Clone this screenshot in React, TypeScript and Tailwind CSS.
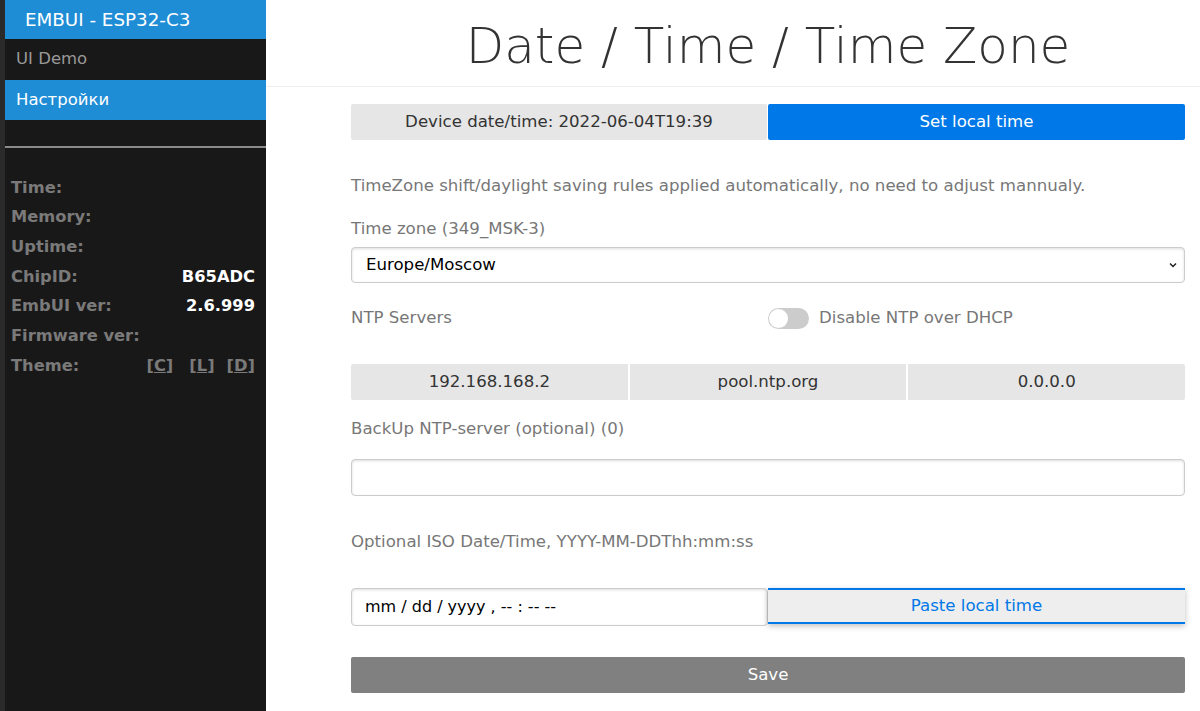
import React from "react";

const font = { fontFamily: '"DejaVu Sans", "Liberation Sans", sans-serif' };

function InfoRow({ label, value, children }: { label: string; value?: string; children?: React.ReactNode }) {
  return (
    <div className="flex items-center justify-between h-[29.7px]">
      <span className="font-bold text-[#7a7a7a] text-[16.3px]">{label}</span>
      {value ? <span className="font-bold text-white text-[16.3px]">{value}</span> : children}
    </div>
  );
}

export default function App() {
  return (
    <div className="flex w-[1200px] h-[711px] overflow-hidden bg-white" style={font}>
      {/* Sidebar */}
      <div className="w-[266px] shrink-0 h-full flex bg-[#191818]">
        <div className="w-[5px] h-full bg-[#2a2a2a]" />
        <div className="flex-1 flex flex-col">
          <div className="h-[40px] bg-[#1f8dd6] text-white text-[18.3px] flex items-center pl-[20px] border-b border-[#191818]">
            EMBUI - ESP32-C3
          </div>
          <div className="h-[40px] text-[#999] text-[16.5px] flex items-center pl-[11px] border-b border-[#191818]">UI Demo</div>
          <div className="h-[40px] bg-[#1f8dd6] text-white text-[16.5px] flex items-center pl-[11px]">Настройки</div>
          <div className="h-[26px]" />
          <div className="h-[2px] bg-[#8a8a8a]" />
          <div className="px-[6px] pt-[25px] pr-[11px]">
            <InfoRow label="Time:" />
            <InfoRow label="Memory:" />
            <InfoRow label="Uptime:" />
            <InfoRow label="ChipID:" value="B65ADC" />
            <InfoRow label="EmbUI ver:" value="2.6.999" />
            <InfoRow label="Firmware ver:" />
            <InfoRow label="Theme:">
              <span className="font-bold text-[#7a7a7a] text-[16.3px] flex gap-[16px]">
                <span>[<u>C</u>]</span>
                <span className="flex gap-[12px]">
                  <span>[<u>L</u>]</span>
                  <span>[<u>D</u>]</span>
                </span>
              </span>
            </InfoRow>
          </div>
        </div>
      </div>

      {/* Main */}
      <div className="flex-1 flex flex-col">
        <div className="h-[87px] border-b border-[#eee] flex items-center">
          <div className="ml-[85px] w-[834px] text-center text-[50px] text-[#333] pt-[6px]" style={{ fontWeight: 200 }}>
            Date / Time / Time Zone
          </div>
        </div>
        <div className="ml-[85px] w-[834px] flex flex-col text-[16.6px] leading-[24px]">
          <div className="mt-[17px] flex h-[36px]">
            <div className="w-[416px] bg-[#e6e6e6] text-[#333] flex items-center justify-center rounded-[2px]">
              Device date/time: 2022-06-04T19:39
            </div>
            <div className="ml-[1px] flex-1 bg-[#0078e7] text-white flex items-center justify-center rounded-[2px]">
              Set local time
            </div>
          </div>
          <div className="mt-[34px] text-[#777]">TimeZone shift/daylight saving rules applied automatically, no need to adjust mannualy.</div>
          <div className="mt-[19px] text-[#777]">Time zone (349_MSK-3)</div>
          <div className="mt-[6px] h-[36px] border border-[#ccc] rounded-[4px] shadow-[inset_0_1px_3px_#ddd] flex items-center justify-between px-[14px] pr-[6px] text-black">
            <span>Europe/Moscow</span>
            <svg width="10" height="10" viewBox="0 0 10 10"><path d="M2 3.5 L5 6.5 L8 3.5" stroke="#222" strokeWidth="1.5" fill="none" /></svg>
          </div>
          <div className="mt-[23px] flex items-center h-[24px]">
            <div className="w-[417px] text-[#777]">NTP Servers</div>
            <div className="flex items-center gap-[10px] text-[#777]">
              <div className="w-[41px] h-[21px] rounded-full bg-[#ccc] relative">
                <div className="absolute left-[1px] top-[1px] w-[19px] h-[19px] rounded-full bg-white" />
              </div>
              <span>Disable NTP over DHCP</span>
            </div>
          </div>
          <div className="mt-[34px] flex h-[36px] gap-[2px]">
            <div className="flex-1 bg-[#e6e6e6] text-[#333] flex items-center justify-center rounded-l-[2px]">192.168.168.2</div>
            <div className="flex-1 bg-[#e6e6e6] text-[#333] flex items-center justify-center">pool.ntp.org</div>
            <div className="flex-1 bg-[#e6e6e6] text-[#333] flex items-center justify-center rounded-r-[2px]">0.0.0.0</div>
          </div>
          <div className="mt-[17px] text-[#777]">BackUp NTP-server (optional) (0)</div>
          <div className="mt-[18px] h-[37px] border border-[#ccc] rounded-[4px] shadow-[inset_0_1px_3px_#ddd]" />
          <div className="mt-[34px] text-[#777]">Optional ISO Date/Time, YYYY-MM-DDThh:mm:ss</div>
          <div className="mt-[34px] flex h-[38px]">
            <div className="w-[417px] border border-[#ccc] rounded-[4px] shadow-[inset_0_1px_3px_#ddd] flex items-center pl-[13px] text-black text-[16px]">
              mm / dd / yyyy ,  -- : --  --
            </div>
            <div className="flex-1 bg-[#eee] border-t-2 border-b-2 border-[#0078e7] text-[#0078e7] flex items-center justify-center shadow-[0_2px_6px_rgba(0,0,0,0.25)] h-[36px]">
              Paste local time
            </div>
          </div>
          <div className="mt-[31px] h-[36px] bg-[#808080] text-white flex items-center justify-center rounded-[2px]">Save</div>
        </div>
      </div>
    </div>
  );
}
